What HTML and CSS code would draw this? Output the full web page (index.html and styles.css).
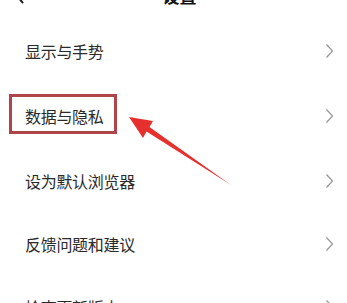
FILE: index.html
```html
<!DOCTYPE html>
<html lang="zh">
<head>
<meta charset="utf-8">
<link rel="stylesheet" href="styles.css">
</head>
<body>
<div class="page">
  <header class="topbar">
    <svg class="back" width="10" height="16" viewBox="0 0 10 16"><path d="M8 1 L2 8 L8 15" fill="none" stroke="#222" stroke-width="2"/></svg>
    <div class="title">设置</div>
  </header>
  <ul class="list">
    <li class="row"><span class="label">显示与手势</span><svg class="chev" width="9" height="16" viewBox="0 0 9 16"><path d="M1.5 1.5 L7.5 8 L1.5 14.5" fill="none" stroke="#9a9a9a" stroke-width="1.3"/></svg></li>
    <li class="row highlighted"><span class="label">数据与隐私</span><svg class="chev" width="9" height="16" viewBox="0 0 9 16"><path d="M1.5 1.5 L7.5 8 L1.5 14.5" fill="none" stroke="#9a9a9a" stroke-width="1.3"/></svg><span class="mark"></span></li>
    <li class="row"><span class="label">设为默认浏览器</span><svg class="chev" width="9" height="16" viewBox="0 0 9 16"><path d="M1.5 1.5 L7.5 8 L1.5 14.5" fill="none" stroke="#9a9a9a" stroke-width="1.3"/></svg></li>
    <li class="row short"><span class="label">反馈问题和建议</span><svg class="chev" width="9" height="16" viewBox="0 0 9 16"><path d="M1.5 1.5 L7.5 8 L1.5 14.5" fill="none" stroke="#9a9a9a" stroke-width="1.3"/></svg></li>
    <li class="row"><span class="label">检查更新版本</span><svg class="chev" width="9" height="16" viewBox="0 0 9 16"><path d="M1.5 1.5 L7.5 8 L1.5 14.5" fill="none" stroke="#9a9a9a" stroke-width="1.3"/></svg></li>
  </ul>
  <svg class="arrow" width="347" height="303" viewBox="0 0 347 303">
    <polygon points="129,117 153,121 149.5,127 231,185 146.5,131.5 143,138" fill="#e5302e"/>
  </svg>
</div>
</body>
</html>
```
FILE: styles.css
```css
html, body {
  margin: 0;
  padding: 0;
  background: #ffffff;
}
.page {
  position: relative;
  width: 347px;
  height: 303px;
  overflow: hidden;
  font-family: "Noto Sans CJK SC", "Noto Sans", sans-serif;
  color: #2a2a2a;
}
.topbar {
  position: relative;
  height: 24px;
  margin-top: -16px;
  display: flex;
  align-items: center;
  justify-content: center;
}
.back {
  position: absolute;
  left: 15px;
  top: 4px;
}
.title {
  font-size: 17px;
  font-weight: 700;
  line-height: 24px;
  color: #111;
  margin-left: 12px;
}
.list {
  list-style: none;
  margin: 10px 0 0 0;
  padding: 0;
}
.row {
  position: relative;
  height: 65px;
  display: flex;
  align-items: center;
  justify-content: space-between;
  padding: 0 13px 0 25px;
  font-size: 16px;
}
.row.short {
  height: 61px;
}
.label {
  line-height: 20px;
  letter-spacing: -0.3px;
}
.chev {
  display: block;
}
.mark {
  position: absolute;
  left: 9px;
  top: 11px;
  width: 108px;
  height: 40px;
  box-sizing: border-box;
  border: 3px solid #b0444b;
}
.arrow {
  position: absolute;
  left: 0;
  top: 0;
}
```
